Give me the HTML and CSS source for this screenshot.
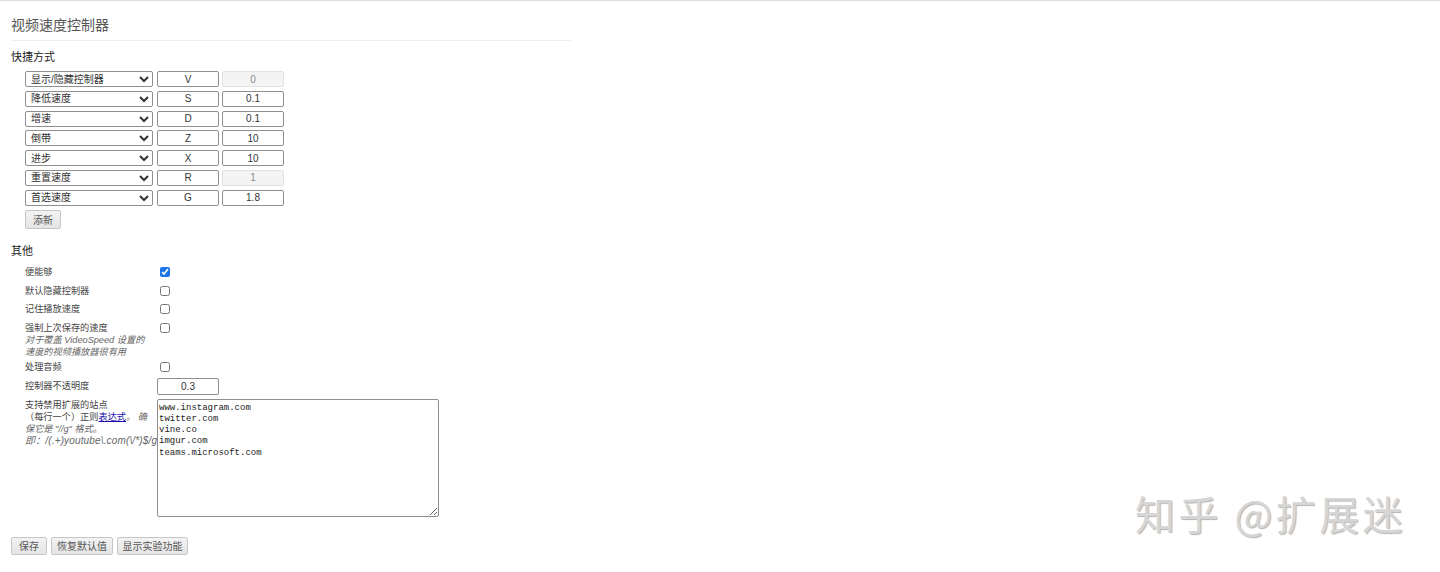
FILE: index.html
```html
<!DOCTYPE html>
<html lang="zh-CN">
<head>
    <meta charset="UTF-8">
    <title>视频速度控制器</title>
    <link rel="stylesheet" href="styles.css">
</head>
<body>
    <div class="page">
        <h1>视频速度控制器</h1>

        <h3>快捷方式</h3>
        <div class="shortcuts">
            <div class="shortcut">
                <select><option>显示/隐藏控制器</option></select>
                <input type="text" class="key" value="V">
                <input type="text" class="value" value="0" disabled>
            </div>
            <div class="shortcut">
                <select><option>降低速度</option></select>
                <input type="text" class="key" value="S">
                <input type="text" class="value" value="0.1">
            </div>
            <div class="shortcut">
                <select><option>增速</option></select>
                <input type="text" class="key" value="D">
                <input type="text" class="value" value="0.1">
            </div>
            <div class="shortcut">
                <select><option>倒带</option></select>
                <input type="text" class="key" value="Z">
                <input type="text" class="value" value="10">
            </div>
            <div class="shortcut">
                <select><option>进步</option></select>
                <input type="text" class="key" value="X">
                <input type="text" class="value" value="10">
            </div>
            <div class="shortcut">
                <select><option>重置速度</option></select>
                <input type="text" class="key" value="R">
                <input type="text" class="value" value="1" disabled>
            </div>
            <div class="shortcut">
                <select><option>首选速度</option></select>
                <input type="text" class="key" value="G">
                <input type="text" class="value" value="1.8">
            </div>
            <div class="add-row">
                <button type="button" class="btn btn-add">添新</button>
            </div>
        </div>

        <h3 class="others">其他</h3>
        <div class="options">
            <div class="option">
                <label>便能够</label>
                <input type="checkbox" checked>
            </div>
            <div class="option">
                <label>默认隐藏控制器</label>
                <input type="checkbox">
            </div>
            <div class="option">
                <label>记住播放速度</label>
                <input type="checkbox">
            </div>
            <div class="option option-note">
                <label>强制上次保存的速度<br><em>对于覆盖 VideoSpeed 设置的<br>速度的视频播放器很有用</em></label>
                <input type="checkbox">
            </div>
            <div class="option">
                <label>处理音频</label>
                <input type="checkbox">
            </div>
            <div class="option option-input">
                <label>控制器不透明度</label>
                <input type="text" class="key" value="0.3">
            </div>
            <div class="option option-blacklist">
                <label>支持禁用扩展的站点<br>（每行一个）正则<a href="#">表达式</a><em>。 确<br>保它是 "//g" 格式。<br><span class="regex">即：/(.+)youtube\.com(\/*)$/gi</span></em></label>
                <textarea>www.instagram.com
twitter.com
vine.co
imgur.com
teams.microsoft.com</textarea>
            </div>
        </div>

        <div class="actions">
            <button type="button" class="btn btn-save">保存</button>
            <button type="button" class="btn btn-restore">恢复默认值</button>
            <button type="button" class="btn btn-experimental">显示实验功能</button>
        </div>
    </div>

    <div class="watermark">知乎 @扩展迷</div>
</body>
</html>
```
FILE: styles.css
```css
body {
    margin: 0;
    border-top: 1px solid #dedede;
    font-family: "Liberation Sans", "Noto Sans CJK SC", sans-serif;
    color: #444;
    background: #fff;
    height: 571px;
    position: relative;
    overflow: hidden;
}

.page {
    padding-left: 11px;
}

h1 {
    width: 560px;
    margin: 0;
    padding: 14px 0 5px;
    line-height: 20px;
    font-size: 14px;
    font-weight: normal;
    color: #555;
    border-bottom: 1px solid #eee;
}

h3 {
    margin: 9px 0 7px;
    font-size: 11px;
    line-height: 14px;
    font-weight: normal;
    color: #222;
}

h3.others {
    margin-top: 15px;
    margin-bottom: 8.5px;
}

.shortcuts {
    display: flex;
    flex-direction: column;
    gap: 3.8px;
    padding-left: 14px;
}

.shortcut {
    display: flex;
    height: 16px;
}

select {
    width: 128px;
    height: 16px;
    margin: 0 4px 0 0;
    padding: 0 1px;
    font-family: "Liberation Sans", "Noto Sans CJK SC", sans-serif;
    font-size: 10px;
    color: #333;
    border: 1px solid #8f8f8f;
    border-radius: 2px;
    background: #fff;
}

input[type="text"] {
    box-sizing: border-box;
    height: 16px;
    margin: 0;
    padding: 0 2px;
    font-family: "Liberation Sans", "Noto Sans CJK SC", sans-serif;
    font-size: 10px;
    color: #333;
    text-align: center;
    border: 1px solid #8f8f8f;
    border-radius: 2px;
    background: #fff;
}

.key {
    width: 62px;
    margin-right: 3px !important;
}

.value {
    width: 62px;
}

input[disabled] {
    background: #f4f4f4;
    border-color: #e2e2e2;
    color: #8a8a8a;
}

.btn {
    box-sizing: border-box;
    height: 19px;
    padding: 0;
    font-family: "Liberation Sans", "Noto Sans CJK SC", sans-serif;
    font-size: 10px;
    color: #555;
    border: 1px solid #c6c6c6;
    border-radius: 2px;
    background: linear-gradient(#f3f3f3, #e4e4e4);
}

.btn-add {
    width: 36px;
}

.options {
    display: flex;
    flex-direction: column;
    gap: 6.5px;
    padding-left: 14px;
}

.option {
    display: flex;
    align-items: flex-start;
    font-size: 9.2px;
    line-height: 12px;
}

.option label {
    width: 132px;
    flex-shrink: 0;
    color: #444;
}

.option em {
    color: #666;
}

.option-note {
    margin-bottom: -3.5px;
}

.option input[type="checkbox"] {
    width: 10px;
    height: 10px;
    margin: 1px 0 0 3px;
    accent-color: #1a73e8;
}

.option-input {
    align-items: center;
    margin-top: -1.5px;
}

.option-input input[type="text"] {
    height: 17px;
}

.option-blacklist {
    margin-top: -2.5px;
}

.option-blacklist label {
    white-space: nowrap;
}

.option-blacklist a {
    color: #1a0dab;
}

.regex {
    font-size: 10px;
    letter-spacing: 0.15px;
}

textarea {
    position: relative;
    box-sizing: border-box;
    width: 282px;
    height: 118px;
    margin: 0;
    padding: 3px 1px;
    font-family: "Liberation Mono", monospace;
    font-size: 9px;
    line-height: 11.3px;
    color: #222;
    border: 1px solid #8f8f8f;
    border-radius: 2px;
    background: #fff;
}

.actions {
    display: flex;
    gap: 4px;
    margin-top: 20px;
}

.actions .btn {
    height: 18px;
}

.btn-save {
    width: 36px;
}

.btn-restore {
    width: 62px;
}

.btn-experimental {
    width: 71px;
}

.watermark {
    position: absolute;
    left: 1135px;
    top: 486px;
    font-family: "Noto Sans CJK SC", sans-serif;
    font-size: 40px;
    line-height: 52px;
    letter-spacing: 3.5px;
    color: #d6d6d6;
    text-shadow: 1px 1px 1px rgba(0, 0, 0, 0.3);
}
```
